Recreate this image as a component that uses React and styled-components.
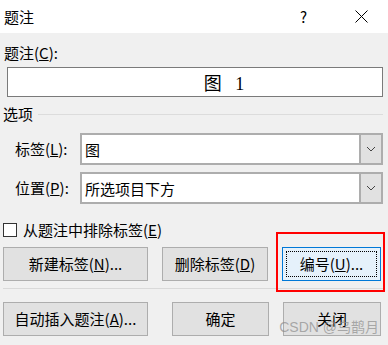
import React from 'react';
import styled, { createGlobalStyle } from 'styled-components';

const GlobalStyle = createGlobalStyle`
  body {
    margin: 0;
    background: #f0f0f0;
    font-family: "Noto Sans CJK SC", "Noto Sans", sans-serif;
    color: #000;
  }
`;

const Dialog = styled.div`
  width: 388px;
  height: 345px;
  display: flex;
  flex-direction: column;
  background: #f0f0f0;
  overflow: hidden;
`;

const TitleBar = styled.div`
  height: 33px;
  flex: none;
  display: flex;
  align-items: center;
  padding-left: 4px;
  background: #fff;
`;

const Title = styled.div`
  font-size: 15px;
  line-height: 20px;
`;

const Controls = styled.div`
  margin-left: auto;
  display: flex;
  align-items: center;
  gap: 48px;
  padding-right: 20px;
`;

const Help = styled.span`
  font-size: 15px;
  line-height: 20px;
`;

const Body = styled.div`
  position: relative;
  display: flex;
  flex-direction: column;
  padding: 0 5px 0 3px;
`;

const Label = styled.div`
  font-size: 15px;
  line-height: 20px;
  margin-top: ${p => p.$top || 0}px;
  padding-left: ${p => p.$indent || 0}px;
  white-space: nowrap;
`;

const CaptionBox = styled.div`
  margin: 4px 0 0 4px;
  height: 30px;
  box-sizing: border-box;
  border: 1px solid #7a7a7a;
  background: #fff;
  display: flex;
  align-items: center;
  justify-content: center;
  padding-left: 58px;
  font-family: "Liberation Serif", "Noto Sans CJK SC", serif;
  font-size: 18px;
  word-spacing: 9px;
`;

const GroupHeader = styled.div`
  margin-top: 7px;
  display: flex;
  align-items: center;
  gap: 5px;
  font-size: 15px;
  line-height: 20px;
  &::after {
    content: '';
    flex: 1;
    height: 1px;
    background: #dcdcdc;
  }
`;

const Fields = styled.div`
  margin-top: 9px;
  display: grid;
  grid-template-columns: 65px 1fr;
  row-gap: 7px;
  padding-left: 12px;
`;

const FieldLabel = styled.div`
  font-size: 15px;
  line-height: 20px;
  align-self: center;
  white-space: nowrap;
`;

const Combo = styled.div`
  height: 32px;
  box-sizing: border-box;
  border: 2px solid #adadad;
  background: #fff;
  display: flex;
  align-items: stretch;
`;

const ComboValue = styled.div`
  flex: 1;
  display: flex;
  align-items: center;
  padding-left: 3px;
  font-size: 15px;
`;

const ComboButton = styled.div`
  width: 20px;
  border-left: 2px solid #adadad;
  background: #e1e1e1;
  display: flex;
  align-items: center;
  justify-content: center;
`;

const CheckRow = styled.label`
  margin-top: 16px;
  display: flex;
  align-items: center;
  gap: 6px;
  font-size: 15px;
  line-height: 20px;
`;

const Box = styled.span`
  width: 14px;
  height: 14px;
  box-sizing: border-box;
  border: 1px solid #333;
  background: #fff;
`;

const ButtonRow = styled.div`
  margin-top: ${p => p.$top}px;
  display: flex;
  align-items: center;
`;

const Button = styled.div`
  position: relative;
  flex: none;
  width: ${p => p.$w}px;
  margin-left: ${p => p.$gap || 0}px;
  height: 34px;
  box-sizing: border-box;
  border: 1px solid ${p => (p.$default ? '#0078d7' : '#adadad')};
  background: ${p => (p.$default ? '#e5f1fb' : '#e1e1e1')};
  display: flex;
  align-items: center;
  justify-content: center;
  font-size: 15px;
  line-height: 20px;
  white-space: nowrap;
`;

const FocusRing = styled.span`
  position: absolute;
  inset: 3px;
  border: 1px dotted #000;
`;

const Highlight = styled.span`
  position: absolute;
  left: -7px;
  right: -5px;
  top: -16px;
  bottom: -12px;
  border: 2px solid #ff0000;
`;

const Separator = styled.div`
  margin-top: 7px;
  height: 1px;
  background: #d9d9d9;
`;

const Watermark = styled.div`
  position: absolute;
  right: 9px;
  bottom: 1px;
  font-family: "Liberation Sans", "Noto Sans CJK SC", sans-serif;
  font-size: 14px;
  line-height: 16px;
  color: rgba(140, 140, 140, 0.7);
  pointer-events: none;
`;

const Chevron = () => (
  <svg width="10" height="6" viewBox="0 0 10 6">
    <polyline points="1,1 5,5 9,1" fill="none" stroke="#444" strokeWidth="1" />
  </svg>
);

const CloseIcon = () => (
  <svg width="13" height="13" viewBox="0 0 13 13">
    <path d="M0.5 0.5 L12.5 12.5 M12.5 0.5 L0.5 12.5" stroke="#000" strokeWidth="1" />
  </svg>
);

export default function App() {
  return (
    <>
      <GlobalStyle />
      <Dialog>
        <TitleBar>
          <Title>题注</Title>
          <Controls>
            <Help>?</Help>
            <CloseIcon />
          </Controls>
        </TitleBar>
        <Body>
          <Label $top={10} $indent={1}>题注(<u>C</u>):</Label>
          <CaptionBox>图 1</CaptionBox>

          <GroupHeader>选项</GroupHeader>
          <Fields>
            <FieldLabel>标签(<u>L</u>):</FieldLabel>
            <Combo>
              <ComboValue>图</ComboValue>
              <ComboButton><Chevron /></ComboButton>
            </Combo>
            <FieldLabel>位置(<u>P</u>):</FieldLabel>
            <Combo>
              <ComboValue>所选项目下方</ComboValue>
              <ComboButton><Chevron /></ComboButton>
            </Combo>
          </Fields>

          <CheckRow>
            <Box />
            <span>从题注中排除标签(<u>E</u>)</span>
          </CheckRow>

          <ButtonRow $top={7}>
            <Button $w={145}>新建标签(<u>N</u>)...</Button>
            <Button $w={106} $gap={14}>删除标签(<u>D</u>)</Button>
            <Button $w={99} $gap={14} $default>
              <FocusRing />
              <span>编号(<u>U</u>)...</span>
              <Highlight />
            </Button>
          </ButtonRow>

          <Separator />

          <ButtonRow $top={13}>
            <Button $w={145}><span>自动插入题注(<u>A</u>)...</span></Button>
            <Button $w={97} $gap={24}>确定</Button>
            <Button $w={98} $gap={14}>关闭</Button>
          </ButtonRow>

          <Watermark>CSDN @乌鹊月</Watermark>
        </Body>
      </Dialog>
    </>
  );
}
